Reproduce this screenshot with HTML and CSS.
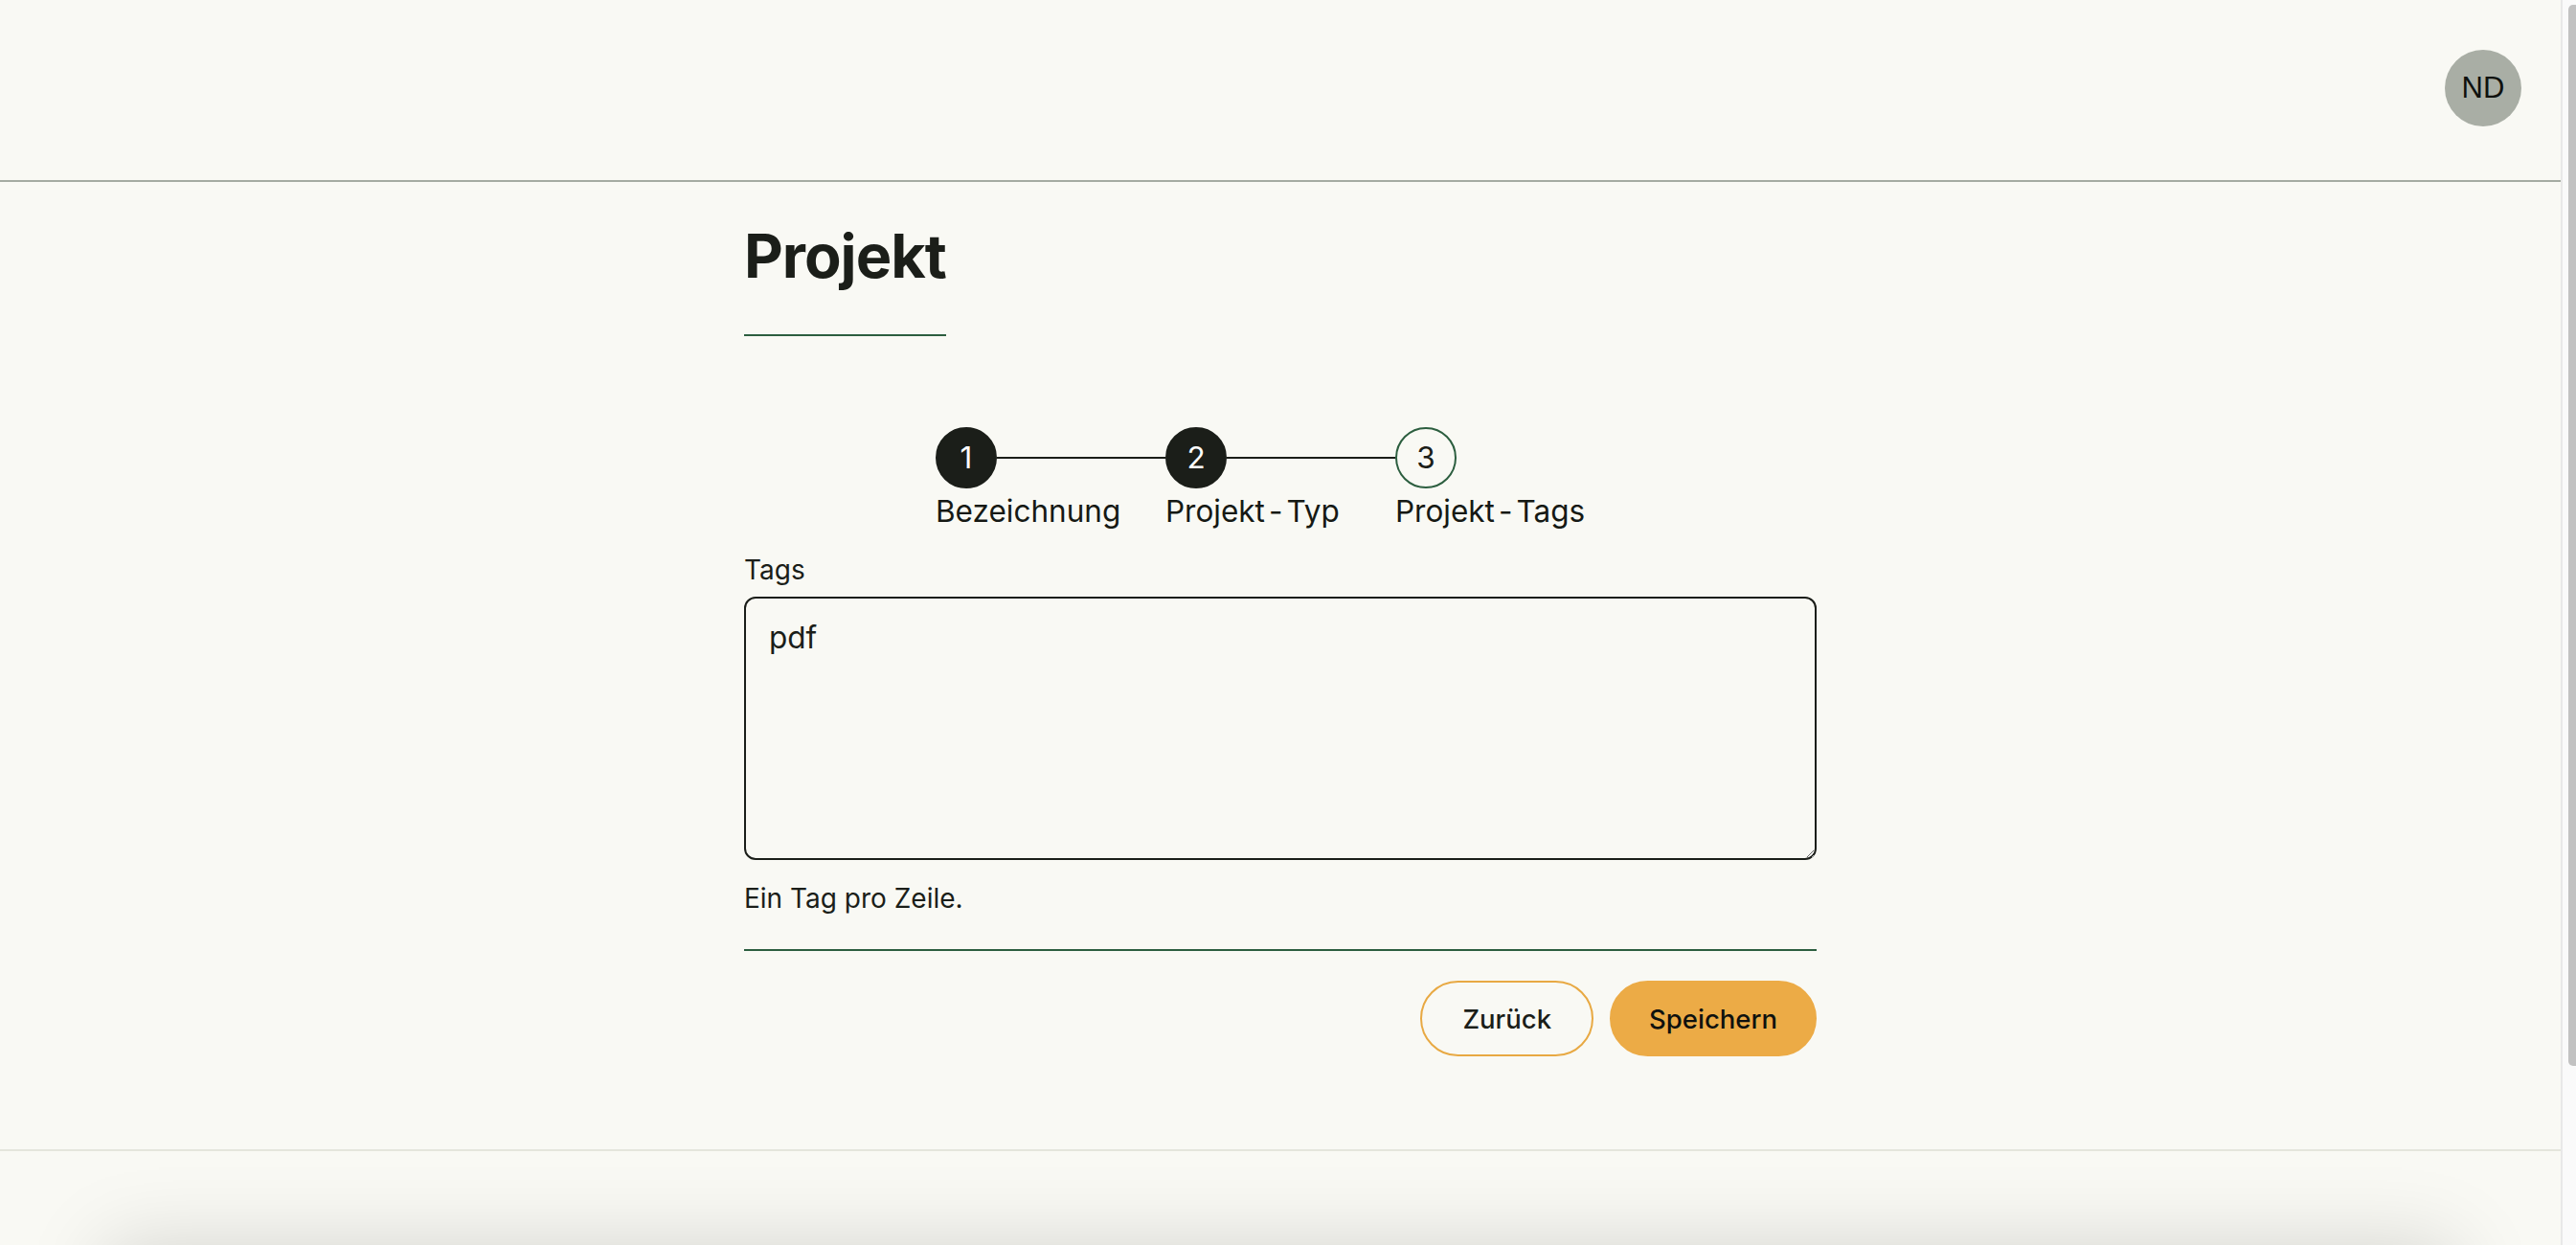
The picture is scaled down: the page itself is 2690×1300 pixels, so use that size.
FILE: index.html
```html
<!DOCTYPE html>
<html lang="de">
<head>
<meta charset="utf-8">
<title>Projekt</title>
<link rel="stylesheet" href="styles.css">
</head>
<body>
  <div class="page">
    <header class="topbar">
      <div class="avatar">ND</div>
    </header>

    <main class="content">
      <h1 class="title">Projekt</h1>

      <ol class="stepper">
        <li class="step-dot done">1</li>
        <li class="step-line"></li>
        <li class="step-dot done">2</li>
        <li class="step-line"></li>
        <li class="step-dot current">3</li>
        <li class="step-label first">Bezeichnung</li>
        <li class="step-label second">Projekt<span class="hy">-</span>Typ</li>
        <li class="step-label third">Projekt<span class="hy">-</span>Tags</li>
      </ol>

      <form class="form">
        <label class="field-label" for="tags">Tags</label>
        <textarea id="tags" class="field-textarea">pdf</textarea>
        <p class="field-hint">Ein Tag pro Zeile.</p>
        <div class="divider"></div>
        <div class="actions">
          <button type="button" class="btn btn-outline">Zurück</button>
          <button type="button" class="btn btn-primary">Speichern</button>
        </div>
      </form>
    </main>

    <footer class="site-footer"></footer>
    <div class="footer-card"></div>
  </div>

  <div class="scrollbar">
    <div class="scrollbar-thumb"></div>
  </div>
</body>
</html>
```
FILE: styles.css
```css
* {
  box-sizing: border-box;
}

html,
body {
  margin: 0;
  padding: 0;
}

body {
  display: flex;
  height: 1300px;
  overflow: hidden;
  background: #f9f9f4;
  color: #1b1e19;
  font-family: Inter, "Noto Sans", "Liberation Sans", sans-serif;
}

.page {
  flex: 1;
  min-width: 0;
  display: flex;
  flex-direction: column;
  overflow: hidden;
}

/* Header */
.topbar {
  flex-shrink: 0;
  height: 190px;
  border-bottom: 2px solid #a5aba2;
  display: flex;
  align-items: center;
  justify-content: flex-end;
  padding: 0 41px 4px 0;
}

.avatar {
  width: 80px;
  height: 80px;
  border-radius: 50%;
  background: #a9aea5;
  color: #0f110e;
  font-family: "Liberation Sans", Arial, sans-serif;
  font-size: 31px;
  display: flex;
  align-items: center;
  justify-content: center;
}

/* Main column */
.content {
  flex-shrink: 0;
  width: 1120px;
  margin: 0 auto;
  padding: 39px 0 97px;
}

.title {
  width: fit-content;
  margin: 0;
  font-size: 63px;
  line-height: 76px;
  font-weight: 700;
  letter-spacing: -1px;
  color: #1b1e19;
  padding-bottom: 44px;
  border-bottom: 2px solid #2c5e3f;
}

/* Stepper */
.stepper {
  list-style: none;
  margin: 95px auto 0;
  padding: 0;
  width: 720px;
  display: grid;
  grid-template-columns: 64px 176px 64px 176px 64px 176px;
  grid-template-rows: 64px auto;
}

.step-dot {
  width: 64px;
  height: 64px;
  border-radius: 50%;
  border: 2px solid #1b1e19;
  display: flex;
  align-items: center;
  justify-content: center;
  font-size: 31.5px;
  line-height: 1;
}

.step-dot.done {
  background: #1b1e19;
  color: #ffffff;
}

.step-dot.current {
  border-color: #2c5e3f;
  background: #f9f9f4;
  color: #1b1e19;
}

.step-line {
  align-self: center;
  height: 2px;
  background: #1b1e19;
}

.step-label {
  grid-row: 2;
  margin-top: 5px;
  font-size: 31.5px;
  line-height: 38px;
  white-space: nowrap;
  color: #161914;
}

.step-label .hy {
  margin: 0 4px;
}

.step-label.first {
  grid-column: 1 / 3;
}

.step-label.second {
  grid-column: 3 / 5;
}

.step-label.third {
  grid-column: 5 / 7;
}

/* Form */
.form {
  margin-top: 25px;
}

.field-label {
  display: block;
  font-size: 28px;
  line-height: 34px;
  margin-bottom: 11px;
}

.field-textarea {
  display: block;
  width: 100%;
  height: 275px;
  border: 2px solid #1b1e19;
  border-radius: 12px;
  background: transparent;
  padding: 17px 24px;
  font-family: Inter, "Noto Sans", "Liberation Sans", sans-serif;
  font-size: 31.5px;
  line-height: 1.5;
  color: #1b1e19;
  resize: vertical;
  outline: none;
}

.field-hint {
  margin: 23px 0 0;
  font-size: 28px;
  line-height: 34px;
}

.divider {
  margin-top: 36px;
  border-top: 2px solid #2c5e3f;
}

.actions {
  margin-top: 31px;
  display: flex;
  justify-content: flex-end;
  gap: 17px;
}

.btn {
  height: 79px;
  border-radius: 40px;
  font-family: Inter, "Noto Sans", "Liberation Sans", sans-serif;
  font-size: 27.5px;
  font-weight: 500;
  color: #1b1e19;
  cursor: pointer;
}

.btn-outline {
  padding: 0 42px;
  background: transparent;
  border: 2px solid #e8a943;
}

.btn-primary {
  padding: 0 39px;
  background: #ecab46;
  border: 2px solid #ecab46;
  color: #0f110e;
}

/* Footer */
.site-footer {
  flex-shrink: 0;
  height: 100px;
  border-top: 2px solid #e4e5dc;
}

.footer-card {
  flex-shrink: 0;
  height: 300px;
  margin: 0 110px;
  background: #f9f9f4;
  box-shadow: 0 0 80px rgba(0, 0, 0, 0.15);
}

/* Scrollbar */
.scrollbar {
  flex-shrink: 0;
  width: 16px;
  height: 1300px;
  background: #fafafa;
  border-left: 2px solid #e8e8e8;
  padding: 5px 0 0 6px;
}

.scrollbar-thumb {
  width: 8px;
  height: 1108px;
  background: #c2c2c2;
  border-radius: 5px 0 0 5px;
}
```
